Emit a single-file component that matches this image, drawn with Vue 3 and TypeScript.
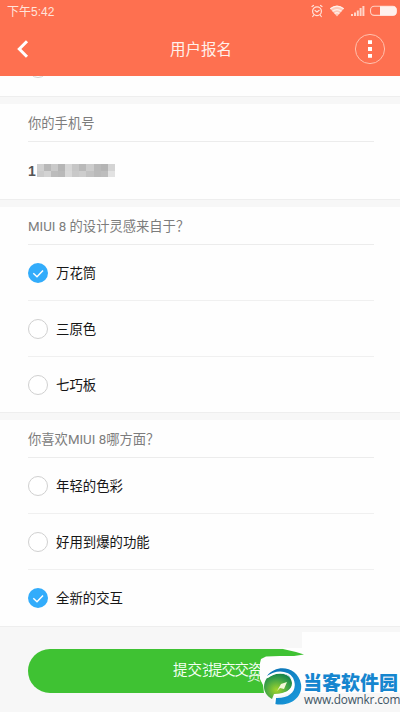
<script setup lang="ts">
interface Option { label: string; checked: boolean }
interface Question { title: string; options: Option[] }

const questions: Question[] = [
  {
    title: 'MIUI 8 的设计灵感来自于？',
    options: [
      { label: '万花筒', checked: true },
      { label: '三原色', checked: false },
      { label: '七巧板', checked: false },
    ],
  },
  {
    title: '你喜欢MIUI 8哪方面？',
    options: [
      { label: '年轻的色彩', checked: false },
      { label: '好用到爆的功能', checked: false },
      { label: '全新的交互', checked: true },
    ],
  },
]

const mosaic: string[] = [
  '#d0d0d0', '#b8b8b8', '#c9c9c9', '#b5b5b5', '#d6d6d6', '#c6c6c6', '#b9b9b9', '#cccccc', '#b9b9b9', '#b4b4b4', '#d4d4d4',
  '#cbcbcb', '#d3d3d3', '#bcbcbc', '#b9b9b9', '#d8d8d8', '#c9c9c9', '#cdcdcd', '#c2c2c2', '#bababa', '#bdbdbd', '#e2e2e2',
]
</script>

<template>
  <main class="screen">
    <header class="header">
      <div class="status">
        <span class="time">下午5:42</span>
        <svg class="status-icons" width="88" height="14" viewBox="0 0 88 14" fill="none">
          <g stroke="#ffe3db" stroke-width="1.2" stroke-linecap="round">
            <circle cx="7" cy="7.2" r="4.4" />
            <path d="M2 2.5 3.5 1.5M12 2.5 10.5 1.5M5 6.5l2 1.5 2.2-1.7M3.5 11.5l-.8 1M10.5 11.5l.8 1" />
          </g>
          <path d="M20 4.5Q27-1 34 4.5L27 12.5Z" fill="#ffc9b9" />
          <path d="M20.3 4.8Q27-.5 33.7 4.8M22.5 7.3q4.5-3.5 9 0M24.7 9.6q2.3-1.8 4.6 0" stroke="#fff0eb" stroke-width="1.2" />
          <path d="M41 10h2v2h-2zM44 8.5h2V12h-2zM46.8 6.5h2V12h-2zM49.6 4h2v8h-2zM52.4 2h2v10h-2z" fill="#ffd5c9" />
          <rect x="60.5" y="2.2" width="26" height="9.2" rx="3.8" stroke="#ffd1c4" stroke-width="1.1" />
          <path d="M70 2.2h13a3.5 3.5 0 0 1 3.5 3.5v2.2a3.5 3.5 0 0 1-3.5 3.5H70z" fill="#fff1ed" />
        </svg>
      </div>
      <div class="nav">
        <svg class="back" width="14" height="20" viewBox="0 0 14 20" fill="none">
          <path d="M11 2.3 3.3 10l7.7 7.7" stroke="#fff" stroke-width="3" />
        </svg>
        <h1>用户报名</h1>
        <svg class="more" width="32" height="32" viewBox="0 0 32 32">
          <circle cx="16" cy="16" r="14.6" fill="none" stroke="#ffc0ad" stroke-width="1" />
          <path d="M14 7.3h4v3.8h-4zM14 14.1h4v3.8h-4zM14 20.9h4v3.8h-4z" fill="#fff" />
        </svg>
      </div>
    </header>

    <section class="card previous"><span class="radio"></span></section>

    <section class="card">
      <h2>你的手机号</h2>
      <div class="value">
        <span>1</span>
        <div class="mosaic"><i v-for="(c, i) in mosaic" :key="i" :style="{ background: c }"></i></div>
      </div>
    </section>

    <section v-for="q in questions" :key="q.title" class="card question">
      <h2>{{ q.title }}</h2>
      <div v-for="o in q.options" :key="o.label" class="option">
        <span class="radio" :class="{ checked: o.checked }">
          <svg v-if="o.checked" width="20" height="20" viewBox="0 0 20 20" fill="none">
            <path d="m5.3 10.3 3.7 3.4 6-6.2" stroke="#fff" stroke-width="1.5" />
          </svg>
        </span>
        <span class="label">{{ o.label }}</span>
      </div>
    </section>

    <footer class="footer">
      <button class="submit">
        <span>提交</span><span class="cut">资</span><span class="tight">提交交资</span>
      </button>
      <span class="echo">资</span>
      <svg class="smear" width="150" height="86" viewBox="0 0 150 86">
        <path d="M52 7H150V68H14L13 60 10 54 10 44 10 38 11 34 16 31.5 30 31 44 31 54 29.5 46 27 33 24V23H52Z" fill="#fefefe" />
      </svg>
      <div class="watermark">
        <svg width="38" height="38" viewBox="0 0 38 38">
          <defs>
            <radialGradient id="leaf" cx="45%" cy="65%" r="65%">
              <stop offset="0" stop-color="#a4d52b" />
              <stop offset=".6" stop-color="#47a844" />
              <stop offset="1" stop-color="#16844b" />
            </radialGradient>
            <linearGradient id="swirl" x1="0" y1="0" x2="1" y2="1">
              <stop offset="0" stop-color="#0a6fb0" />
              <stop offset="1" stop-color="#1a9de0" />
            </linearGradient>
          </defs>
          <path d="M3 9C13-4 34 0 37 17c2 13-11 23-26 20l0-6c15 1 22-8 19-16C26 5 11 3 3 9Z" fill="url(#swirl)" />
          <path d="M3 11C14 3 27 6 28 16c0 7-7 11-18 11l-2 5C-1 27-2 18 3 11Z" fill="url(#leaf)" />
          <path d="M3 10.5C14 2 28 5 29.5 15c1 8-7 13-18 13l-1 9" fill="none" stroke="#fff" stroke-width="1.8" />
          <path d="m13 24 4-7 6-2-3 7-4-1Z" fill="#f4f8d8" />
        </svg>
        <div class="brand">
          <strong>当客软件园</strong>
          <span>www.downkr.com</span>
        </div>
      </div>
    </footer>
  </main>
</template>

<style>
body { margin: 0; background: #f7f7f7; }
</style>

<style scoped>
* { box-sizing: border-box; }
.screen { width: 400px; height: 712px; overflow: hidden; background: #f7f7f7; font-family: "Liberation Sans", "Noto Sans CJK SC", sans-serif; display: flex; flex-direction: column; }
.header { height: 76px; flex: none; background: #fe7050; color: #fff; }
.status { height: 22px; display: flex; justify-content: space-between; align-items: center; padding: 0 2px 0 7px; }
.time { font-size: 12px; color: #ffe3db; line-height: 22px; padding-top: 2px; }
.nav { height: 54px; display: grid; grid-template-columns: 32px 1fr 32px; align-items: center; padding: 0 14px 0 16px; }
h1 { margin: 0; font-size: 15.5px; font-weight: 400; text-align: center; line-height: 24px; color: #fff0eb; padding-top: 2px; }
.card { flex: none; background: #fefefe; padding: 0 26px 0 28px; margin-bottom: 8px; box-shadow: 0 1px 0 #eee; }
.previous { height: 20px; overflow: hidden; }
.previous .radio { display: block; margin-top: -18px; }
h2 { margin: 0; height: 38px; border-bottom: 1px solid #ececec; font-family: Roboto, "Noto Sans CJK SC", sans-serif; font-size: 13.3px; line-height: 39px; font-weight: 400; color: #7c7c7c; white-space: nowrap; }
.value { height: 57px; display: flex; align-items: center; font-size: 14px; font-weight: 700; color: #555; }
.mosaic { display: grid; grid-template-columns: repeat(11, 7.1px); grid-auto-rows: 6.5px; margin-left: 1px; }
.question:last-of-type { margin-bottom: 0; }
.option { height: 56px; display: flex; align-items: center; gap: 8px; border-bottom: 1px solid #f0f0f0; font-size: 13.4px; color: #161616; }
.option:last-child { border-bottom: 0; height: 55px; }
.question:last-of-type .option:last-child { height: 56px; }
.label { padding-bottom: 2px; }
.radio { width: 20px; height: 20px; flex: none; border: 1px solid #d0d0d0; border-radius: 50%; background: #fff; }
.radio.checked { border: 0; background: #32acfb; }
.radio svg { display: block; }
.footer { position: relative; flex: 1; padding: 23px 28px 0; }
.submit { display: flex; align-items: center; justify-content: flex-start; width: 344px; height: 44px; padding: 0 0 5px 145px; border: 0; border-radius: 22px; background: #3fc233; color: #f4fff2; font-family: inherit; font-size: 14.5px; white-space: nowrap; }
.cut { width: 6px; overflow: hidden; }
.tight { letter-spacing: -1.2px; }
.echo { position: absolute; left: 247px; top: 39px; font-size: 14px; line-height: 20px; color: #d9f3d6; clip-path: inset(9px 0 0 0); }
.smear { position: absolute; left: 250px; top: -1px; }
.watermark { position: absolute; left: 264px; top: 41px; display: flex; gap: 1px; }
.brand { display: flex; flex-direction: column; padding-top: 5px; white-space: nowrap; }
.brand strong { font-family: "Noto Sans CJK SC", sans-serif; font-weight: 900; font-size: 19px; line-height: 20px; color: #1686cf; }
.brand span { font-family: "Open Sans", sans-serif; font-size: 11.8px; letter-spacing: -0.2px; line-height: 14px; padding-left: 1px; color: #3e5564; }
</style>
